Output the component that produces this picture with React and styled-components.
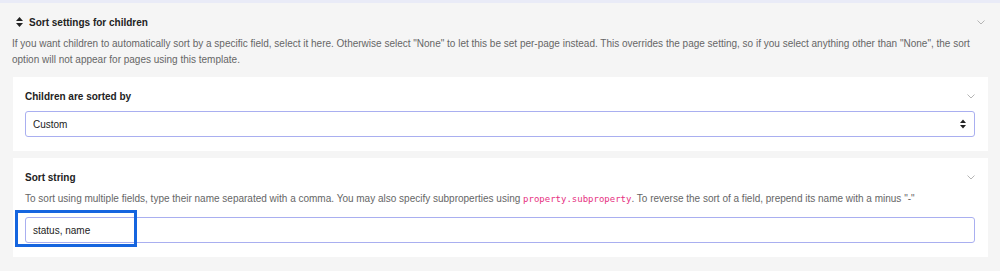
import React from "react";
import styled, { createGlobalStyle } from "styled-components";

const Global = createGlobalStyle`
  html, body { margin: 0; padding: 0; background: #f5f5f5; }
  body { font-family: "Liberation Sans", Arial, sans-serif; color: #222; }
`;

const Page = styled.div`
  border-top: 3px solid #e9ebf7;
  padding: 0 12px 14px 12px;
`;

const HeaderRow = styled.div`
  display: flex;
  align-items: center;
  height: 20px;
  margin-top: 9px;
  padding-left: 4px;
  padding-right: 3px;
`;

const Title = styled.div`
  flex: 1;
  display: flex;
  align-items: center;
  gap: 6px;
  font-size: 10px;
  font-weight: bold;
  color: #222;
`;

const Description = styled.p`
  margin: 4px 0 9px 0;
  font-size: 10px;
  line-height: 16px;
  color: #666;
`;

const Card = styled.div`
  background: #fff;
  margin: 0 0 0 1px;
  padding: 12px 13px 14px 12px;
  & + & { margin-top: 7px; }
`;

const CardHead = styled.div`
  display: flex;
  align-items: center;
  justify-content: space-between;
  height: 15px;
`;

const CardTitle = styled.div`
  font-size: 10px;
  font-weight: bold;
  color: #222;
`;

const Help = styled.div`
  margin-top: 6px;
  font-size: 10px;
  line-height: 16px;
  color: #666;
`;

const Code = styled.code`
  font-family: "DejaVu Sans Mono", "Liberation Mono", monospace;
  font-size: 9px;
  color: #e6307f;
`;

const Field = styled.div`
  position: relative;
  margin-top: ${(p) => p.$gap}px;
`;

const Box = styled.div`
  box-sizing: border-box;
  height: 26px;
  border: 1px solid #a9aff0;
  border-radius: 3px;
  display: flex;
  align-items: center;
  justify-content: space-between;
  padding: 0 8px 0 7px;
  font-size: 10px;
  color: #222;
  background: #fff;
`;

const Highlight = styled.div`
  position: absolute;
  left: -10px;
  top: -7px;
  width: 122px;
  height: 37px;
  box-sizing: border-box;
  border: 3px solid #1565df;
`;

const Chevron = () => (
  <svg width="8" height="5" viewBox="0 0 8 5" fill="none">
    <path d="M0.5 0.5 L4 4 L7.5 0.5" stroke="#b5b5b5" strokeWidth="1" />
  </svg>
);

const SortIcon = () => (
  <svg width="7" height="10" viewBox="0 0 7 10">
    <path d="M3.5 0 L7 4 L0 4 Z M0 6 L7 6 L3.5 10 Z" fill="#222" />
  </svg>
);

const SelectArrows = () => (
  <svg width="6" height="10" viewBox="0 0 6 10">
    <path d="M3 0.5 L6 4 L0 4 Z M0 6 L6 6 L3 9.5 Z" fill="#222" />
  </svg>
);

export default function App() {
  return (
    <>
      <Global />
      <Page>
        <HeaderRow>
          <Title>
            <SortIcon />
            Sort settings for children
          </Title>
          <Chevron />
        </HeaderRow>
        <Description>
          If you want children to automatically sort by a specific field, select it here. Otherwise select "None" to let this be set per-page instead. This overrides the page setting, so if you select anything other than "None", the sort option will not appear for pages using this template.
        </Description>
        <Card>
          <CardHead>
            <CardTitle>Children are sorted by</CardTitle>
            <Chevron />
          </CardHead>
          <Field $gap={7}>
            <Box>
              <span>Custom</span>
              <SelectArrows />
            </Box>
          </Field>
        </Card>
        <Card>
          <CardHead>
            <CardTitle>Sort string</CardTitle>
            <Chevron />
          </CardHead>
          <Help>
            To sort using multiple fields, type their name separated with a comma. You may also specify subproperties using <Code>property.subproperty</Code>. To reverse the sort of a field, prepend its name with a minus "-"
          </Help>
          <Field $gap={10}>
            <Box>
              <span>status, name</span>
            </Box>
            <Highlight />
          </Field>
        </Card>
      </Page>
    </>
  );
}
